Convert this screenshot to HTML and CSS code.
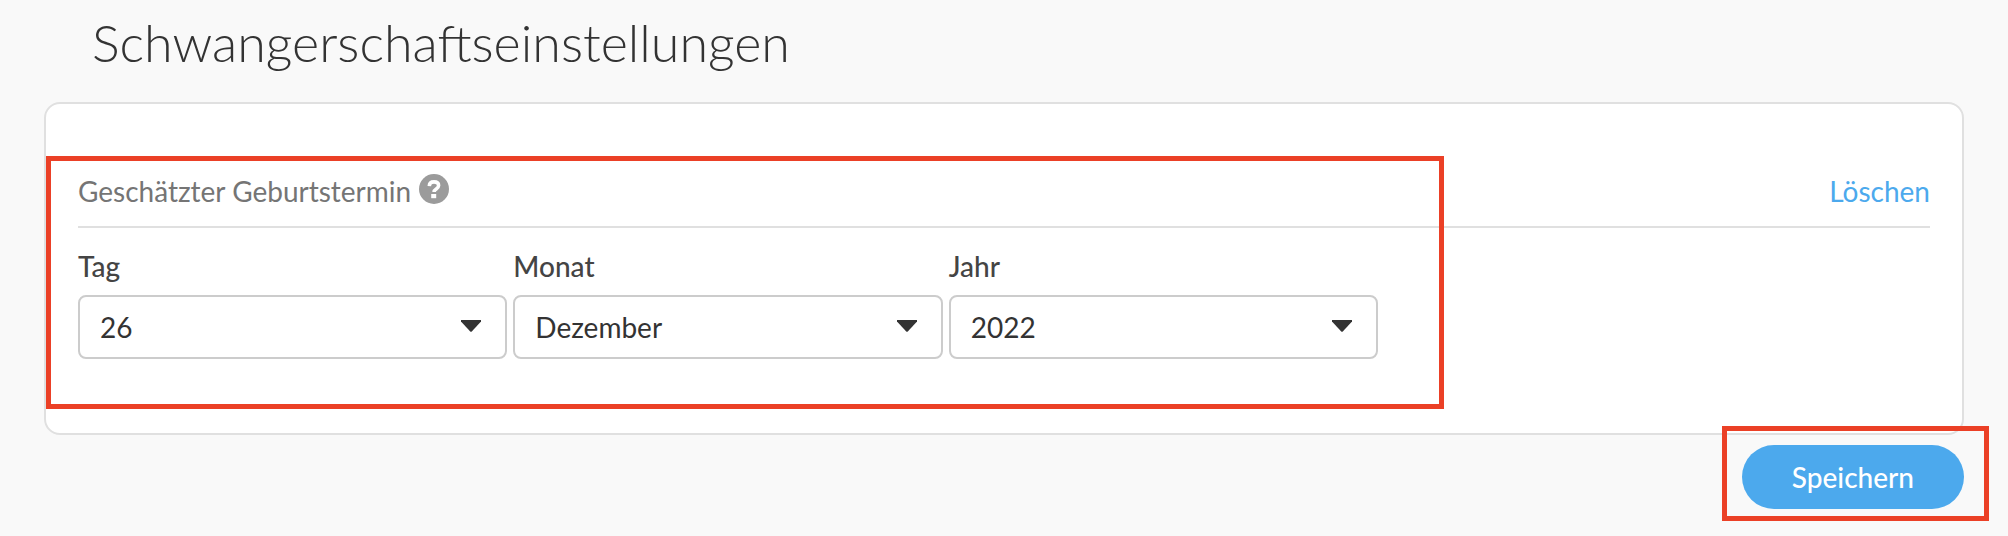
FILE: index.html
```html
<!DOCTYPE html>
<html lang="de">
<head>
    <meta charset="UTF-8">
    <meta name="viewport" content="width=device-width, initial-scale=1.0">
    <title>Schwangerschaftseinstellungen</title>
    <link rel="stylesheet" href="styles.css">
</head>
<body>
    <main class="page">
        <h1 class="page-title">Schwangerschaftseinstellungen</h1>

        <form class="settings">
            <div class="card">
                <section class="due-date">
                    <div class="due-date-header">
                        <h2 class="due-date-title">Geschätzter Geburtstermin</h2>
                        <button type="button" class="help" aria-label="Hilfe">
                            <svg viewBox="0 0 30 30" width="30" height="30" aria-hidden="true">
                                <circle cx="15" cy="15" r="15" fill="#9b9b9b"/>
                                <path d="M10.3 12.1C10.4 9.4 12.2 7.9 15 7.9c2.9 0 4.6 1.4 4.6 3.7 0 3.5-4.5 3.2-4.5 6.3" fill="none" stroke="#fff" stroke-width="3.6"/>
                                <rect x="12.2" y="20" width="5" height="4.2" fill="#fff"/>
                            </svg>
                        </button>
                        <a class="delete" href="#">Löschen</a>
                    </div>

                    <div class="fields">
                        <div class="field">
                            <label for="day">Tag</label>
                            <div class="select">
                                <select id="day"><option>26</option></select>
                                <svg class="caret" viewBox="0 0 20 12" aria-hidden="true"><path d="M0 0h20v1.5L11 11.3q-1 1-2 0L0 1.5z"/></svg>
                            </div>
                        </div>
                        <div class="field">
                            <label for="month">Monat</label>
                            <div class="select">
                                <select id="month"><option>Dezember</option></select>
                                <svg class="caret" viewBox="0 0 20 12" aria-hidden="true"><path d="M0 0h20v1.5L11 11.3q-1 1-2 0L0 1.5z"/></svg>
                            </div>
                        </div>
                        <div class="field">
                            <label for="year">Jahr</label>
                            <div class="select">
                                <select id="year"><option>2022</option></select>
                                <svg class="caret" viewBox="0 0 20 12" aria-hidden="true"><path d="M0 0h20v1.5L11 11.3q-1 1-2 0L0 1.5z"/></svg>
                            </div>
                        </div>
                    </div>
                    <div class="highlight highlight-date"></div>
                </section>
            </div>

            <div class="actions">
                <div class="save-wrap">
                    <button type="submit" class="save">Speichern</button>
                    <div class="highlight highlight-save"></div>
                </div>
            </div>
        </form>
    </main>
</body>
</html>
```

FILE: styles.css
```css
* {
    box-sizing: border-box;
}

body {
    margin: 0;
    background: #f9f9f9;
    color: #333;
    font-family: Lato, "Liberation Sans", sans-serif;
    font-size: 28px;
    line-height: 34px;
}

.page {
    padding: 10px 44px 28px;
}

.page-title {
    margin: 0 0 28px;
    padding-left: 48px;
    font-size: 52px;
    font-weight: 300;
    line-height: 64px;
}

.card {
    padding: 70px 32px 74px;
    background: #fff;
    border: 2px solid #e0e0e0;
    border-radius: 16px;
}

.due-date {
    position: relative;
}

.due-date-header {
    display: flex;
    align-items: flex-start;
    padding-bottom: 18px;
    border-bottom: 2px solid #e0e0e0;
}

.due-date-title {
    margin: 0;
    color: #757575;
    font-size: 28px;
    font-weight: 400;
}

.help {
    display: flex;
    margin-left: 8px;
    padding: 0;
    background: none;
    border: none;
    cursor: pointer;
}

.delete {
    margin-left: auto;
    color: #4ca9ed;
    text-decoration: none;
}

.fields {
    display: grid;
    grid-template-columns: repeat(3, 1fr);
    gap: 6px;
    max-width: 1300px;
    margin-top: 21px;
}

.field label {
    display: block;
    margin-bottom: 12px;
    color: #444;
    font-family: "Lato Medium", Lato, "Liberation Sans", sans-serif;
    font-weight: 500;
}

.select {
    position: relative;
}

.select select {
    display: block;
    width: 100%;
    height: 64px;
    padding: 0 60px 0 20px;
    appearance: none;
    background: #fff;
    border: 2px solid #ccc;
    border-radius: 8px;
    color: #333;
    font: inherit;
}

/* sits over the select, clicks go through to it */
.caret {
    position: absolute;
    top: 25px;
    right: 26px;
    width: 20px;
    height: 12px;
    fill: #333;
    pointer-events: none;
}

.actions {
    display: flex;
    justify-content: flex-end;
    margin-top: 10px;
}

.save-wrap {
    position: relative;
}

.save {
    display: block;
    height: 64px;
    padding: 0 50px;
    background: #4ca9ed;
    border: none;
    border-radius: 32px;
    color: #fff;
    font: inherit;
    font-family: "Lato Medium", Lato, "Liberation Sans", sans-serif;
    font-weight: 500;
    cursor: pointer;
}

/* red marker frames */
.highlight {
    position: absolute;
    border: 5px solid #eb4026;
    pointer-events: none;
}

.highlight-date {
    top: -18px;
    bottom: -50px;
    left: -32px;
    width: 100%;
    max-width: 1398px;
}

.highlight-save {
    top: -19px;
    right: -25px;
    bottom: -12px;
    left: -20px;
}
```
